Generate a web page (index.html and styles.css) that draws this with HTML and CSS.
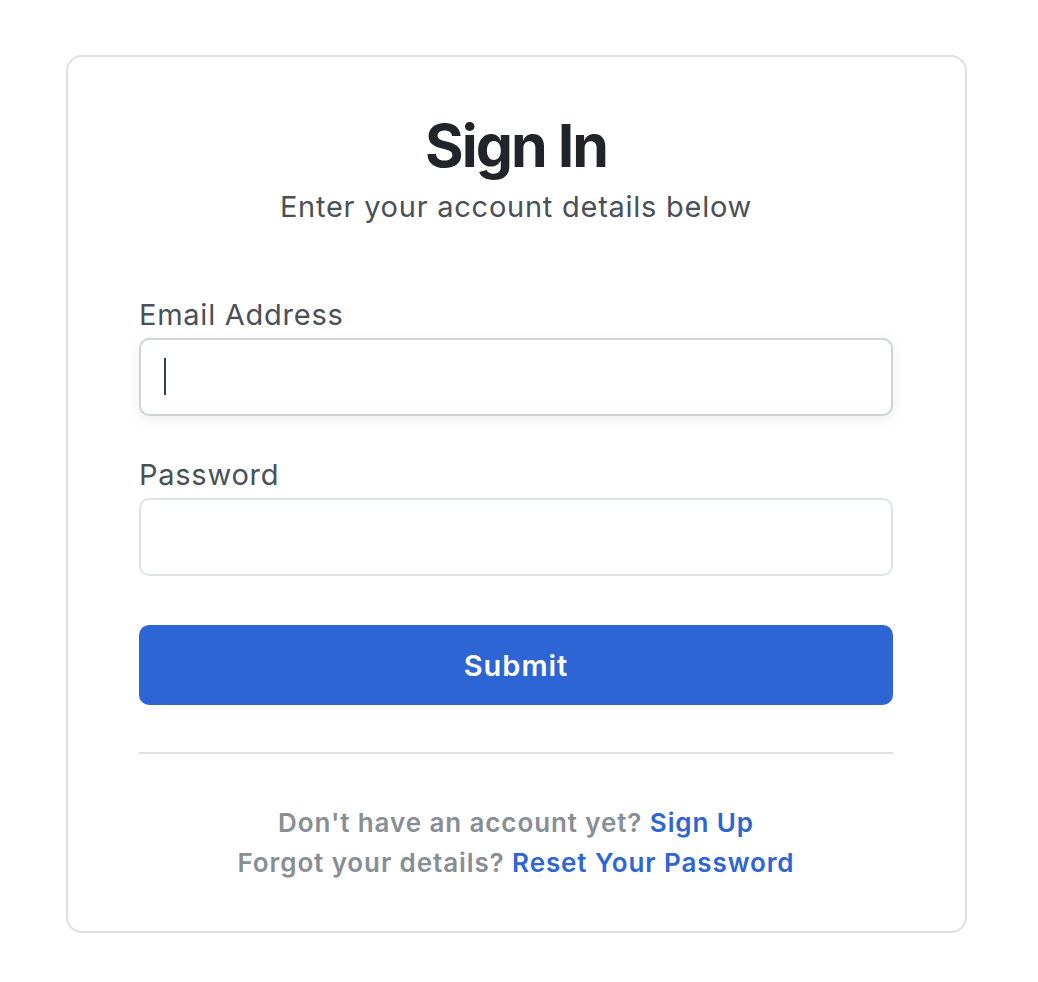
FILE: index.html
```html
<!DOCTYPE html>
<html lang="en">
<head>
<meta charset="utf-8">
<title>Sign In</title>
<link rel="stylesheet" href="styles.css">
</head>
<body>
<main class="card">
  <h1 class="title">Sign In</h1>
  <p class="subtitle">Enter your account details below</p>
  <form class="form">
    <label class="label" for="email">Email Address</label>
    <div class="field">
      <input class="input input-focus" id="email" type="email">
      <span class="caret"></span>
    </div>
    <label class="label label-second" for="password">Password</label>
    <div class="field">
      <input class="input" id="password" type="password">
    </div>
    <button class="submit" type="button">Submit</button>
  </form>
  <hr class="divider">
  <div class="footer">
    <p class="footer-line">Don't have an account yet? <a class="link" href="#">Sign Up</a></p>
    <p class="footer-line">Forgot your details? <a class="link" href="#">Reset Your Password</a></p>
  </div>
</main>
</body>
</html>
```
FILE: styles.css
```css
html, body {
  margin: 0;
  padding: 0;
  background: #ffffff;
}
body {
  font-family: Inter, "Noto Sans", "Liberation Sans", sans-serif;
  padding: 55px 0 0 66px;
}
.card {
  box-sizing: border-box;
  width: 901px;
  border: 2px solid #dfdfdf;
  border-radius: 16px;
  padding: 53px 72px 48px 71px;
  background: #fff;
}
.title {
  margin: 0;
  font-size: 59px;
  line-height: 72px;
  font-weight: 700;
  color: #212529;
  text-align: center;
  letter-spacing: -2px;
}
.subtitle {
  margin: 5px 0 0;
  font-size: 29px;
  line-height: 40px;
  color: #495057;
  text-align: center;
  letter-spacing: 0.75px;
}
.form {
  display: flex;
  flex-direction: column;
  margin-top: 68px;
}
.label {
  font-size: 29px;
  line-height: 40px;
  color: #495057;
  margin-bottom: 3px;
  letter-spacing: 0.75px;
}
.label-second {
  margin-top: 39px;
}
.field {
  position: relative;
}
.input {
  display: block;
  box-sizing: border-box;
  width: 100%;
  height: 78px;
  border: 2px solid #dfe2e6;
  border-radius: 10px;
  background: #fff;
  outline: none;
  font: inherit;
  font-size: 28px;
  padding: 0 24px;
}
.input-focus {
  border-color: #cfd3d8;
  box-shadow: 0 3px 14px rgba(0, 0, 0, 0.07);
}
.caret {
  position: absolute;
  left: 25px;
  top: 20px;
  width: 2px;
  height: 37px;
  background: #3a3f45;
}
.submit {
  margin-top: 49px;
  height: 80px;
  border: none;
  border-radius: 10px;
  background: #2e65d4;
  color: #fff;
  font: inherit;
  font-size: 29px;
  font-weight: 600;
  letter-spacing: 1px;
  cursor: pointer;
}
.divider {
  margin: 47px 0 0;
  border: none;
  height: 2px;
  background: #e1e1e1;
}
.footer {
  margin-top: 49px;
  text-align: center;
}
.footer-line {
  margin: 0;
  font-size: 26px;
  line-height: 40px;
  font-weight: 600;
  color: #878e96;
  letter-spacing: 0.9px;
}
.link {
  color: #2e65d4;
  text-decoration: none;
}
```
